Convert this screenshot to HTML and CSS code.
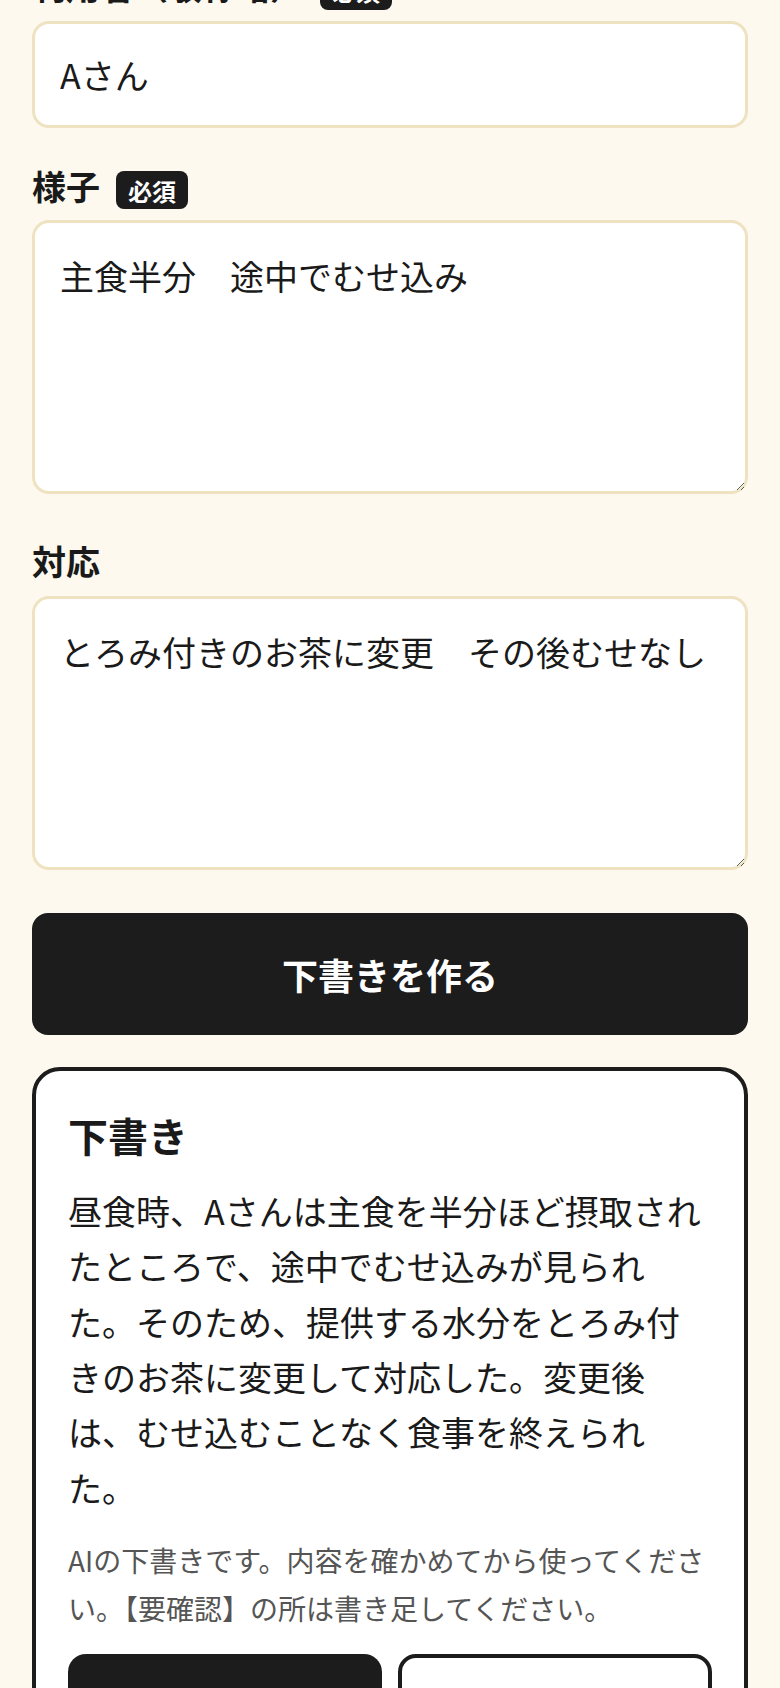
FILE: index.html
```html
<!DOCTYPE html>
<html lang="ja">
<head>
    <meta charset="UTF-8">
    <meta name="viewport" content="width=device-width, initial-scale=1.0">
    <title>記録の下書き</title>
    <link rel="stylesheet" href="styles.css">
</head>
<body>
    <main class="page">
        <div class="field">
            <div class="label-row">
                <label class="label" for="person">利用者（敬称略）</label>
                <span class="badge">必須</span>
            </div>
            <input class="input" id="person" type="text" value="Aさん">
        </div>

        <div class="field field-area">
            <div class="label-row">
                <label class="label" for="state">様子</label>
                <span class="badge">必須</span>
            </div>
            <textarea class="textarea" id="state">主食半分　途中でむせ込み</textarea>
        </div>

        <div class="field field-area">
            <div class="label-row">
                <label class="label" for="action">対応</label>
            </div>
            <textarea class="textarea" id="action">とろみ付きのお茶に変更　その後むせなし</textarea>
        </div>

        <button class="primary">下書きを作る</button>

        <section class="draft">
            <h2 class="draft-title">下書き</h2>
            <p class="draft-text">昼食時、Aさんは主食を半分ほど摂取されたところで、途中でむせ込みが見られた。そのため、提供する水分をとろみ付きのお茶に変更して対応した。変更後は、むせ込むことなく食事を終えられた。</p>
            <p class="draft-note">AIの下書きです。内容を確かめてから使ってください。【要確認】の所は書き足してください。</p>
            <div class="actions">
                <button class="action action-dark">コピーする</button>
                <button class="action action-light">書き直す</button>
            </div>
        </section>
    </main>
</body>
</html>
```

FILE: styles.css
```css
* {
    box-sizing: border-box;
}

body {
    margin: 0;
    background-color: #fdf9ee;
    color: #1a1a1a;
    font-family: "Noto Sans CJK JP", "Noto Sans", sans-serif;
}

.page {
    display: flow-root;
    padding: 0 32px 40px;
}

.page > .field:first-child {
    margin-top: -38px;
}

.field {
    margin-bottom: 34px;
}

.field-area {
    margin-bottom: 43px;
}

.label-row {
    display: flex;
    align-items: flex-end;
    gap: 16px;
    margin-bottom: 11px;
}

.label {
    font-size: 34px;
    font-weight: 700;
    line-height: 1.4;
}

.badge {
    display: flex;
    align-items: center;
    justify-content: center;
    width: 72px;
    height: 38px;
    border-radius: 8px;
    background-color: #1c1c1c;
    color: #fff;
    font-size: 24px;
    font-weight: 700;
}

.input,
.textarea {
    display: block;
    width: 100%;
    border: 3px solid #eee2c1;
    border-radius: 17px;
    background-color: #fff;
    color: #1a1a1a;
    font-family: inherit;
    font-size: 34px;
    outline: none;
}

.input {
    height: 107px;
    padding: 0 25px;
}

.textarea {
    height: 274px;
    padding: 27px 25px;
    line-height: 1.5;
    resize: vertical;
}

.primary {
    display: block;
    width: 100%;
    height: 122px;
    margin: 0 0 32px;
    border: none;
    border-radius: 16px;
    background-color: #1c1c1c;
    color: #fff;
    font-family: inherit;
    font-size: 36px;
    font-weight: 700;
    cursor: pointer;
}

.draft {
    border: 4px solid #1c1c1c;
    border-radius: 28px;
    background-color: #fff;
    padding: 36px 32px 32px;
}

.draft-title {
    margin: 0 0 20px;
    font-size: 40px;
    font-weight: 700;
    line-height: 1.4;
}

.draft-text {
    margin: 0;
    font-size: 34px;
    line-height: 1.63;
}

.draft-note {
    margin: 22px 0 0;
    color: #555;
    font-size: 28px;
    line-height: 1.7;
}

.actions {
    display: grid;
    grid-template-columns: 1fr 1fr;
    gap: 16px;
    margin-top: 22px;
}

.action {
    height: 112px;
    border-radius: 18px;
    font-family: inherit;
    font-size: 32px;
    font-weight: 700;
    cursor: pointer;
}

.action-dark {
    border: none;
    background-color: #1c1c1c;
    color: #fff;
}

.action-light {
    border: 4px solid #1c1c1c;
    background-color: #fff;
    color: #1c1c1c;
}
```
